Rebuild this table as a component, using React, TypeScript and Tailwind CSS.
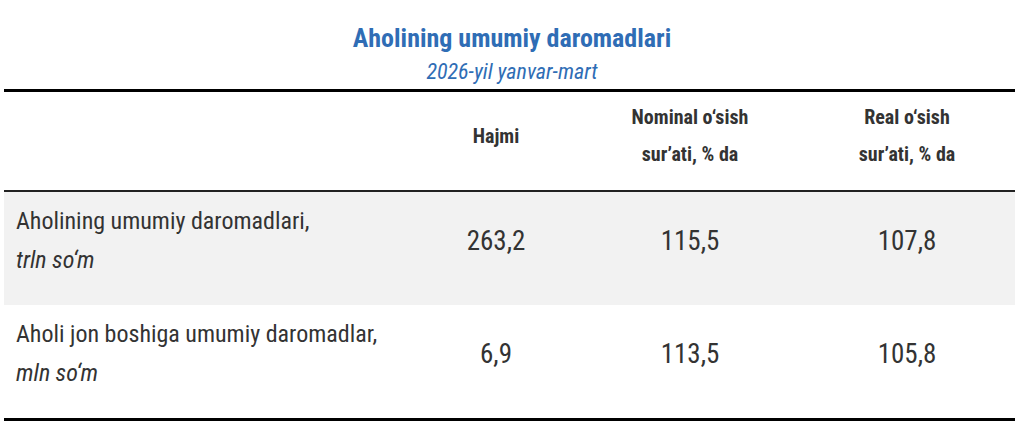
const rows = [
  { label: 'Aholining umumiy daromadlari,', unit: 'trln so‘m', values: ['263,2', '115,5', '107,8'], shaded: true },
  { label: 'Aholi jon boshiga umumiy daromadlar,', unit: 'mln so‘m', values: ['6,9', '113,5', '105,8'], shaded: false },
];

const GRID = 'grid grid-cols-[407px_170px_218px_216px]';

export default function App() {
  return (
    <div className="min-h-[433px] bg-white font-['Roboto',sans-serif] font-stretch-condensed text-[#333]">
      {/* Title */}
      <div className="pt-[21px] text-center">
        <div className="text-[26px] font-bold leading-[34px] text-[#2f6db5]">Aholining umumiy daromadlari</div>
        <div className="mt-[1px] text-[22px] italic leading-[32px] text-[#2f6db5]">2026-yil yanvar-mart</div>
      </div>

      <div className="ml-[4px] mt-[1px] w-[1011px]">
        {/* Header */}
        <div className={`${GRID} border-t-[3px] border-t-black border-b-2 border-b-[#222] pt-[7px] pb-[17px] items-center text-[20px] font-bold leading-[37px] text-[#333]`}>
          <div />
          <div className="text-center">Hajmi</div>
          <div className="text-center">Nominal o‘sish<br />sur’ati, % da</div>
          <div className="text-center">Real o‘sish<br />sur’ati, % da</div>
        </div>

        {/* Body */}
        {rows.map(r => (
          <div
            key={r.label}
            className={`${GRID} items-center pt-[10px] pb-[25px] ${r.shaded ? 'bg-[#f2f2f2]' : 'bg-white'}`}
          >
            <div className="pl-[12px] text-[24px] leading-[39px]">
              {r.label}
              <br />
              <span className="italic">{r.unit}</span>
            </div>
            {r.values.map((v, i) => (
              <div key={i} className="text-center text-[27px]">{v}</div>
            ))}
          </div>
        ))}
        <div className="h-[3px] bg-black" />
      </div>
    </div>
  );
}
